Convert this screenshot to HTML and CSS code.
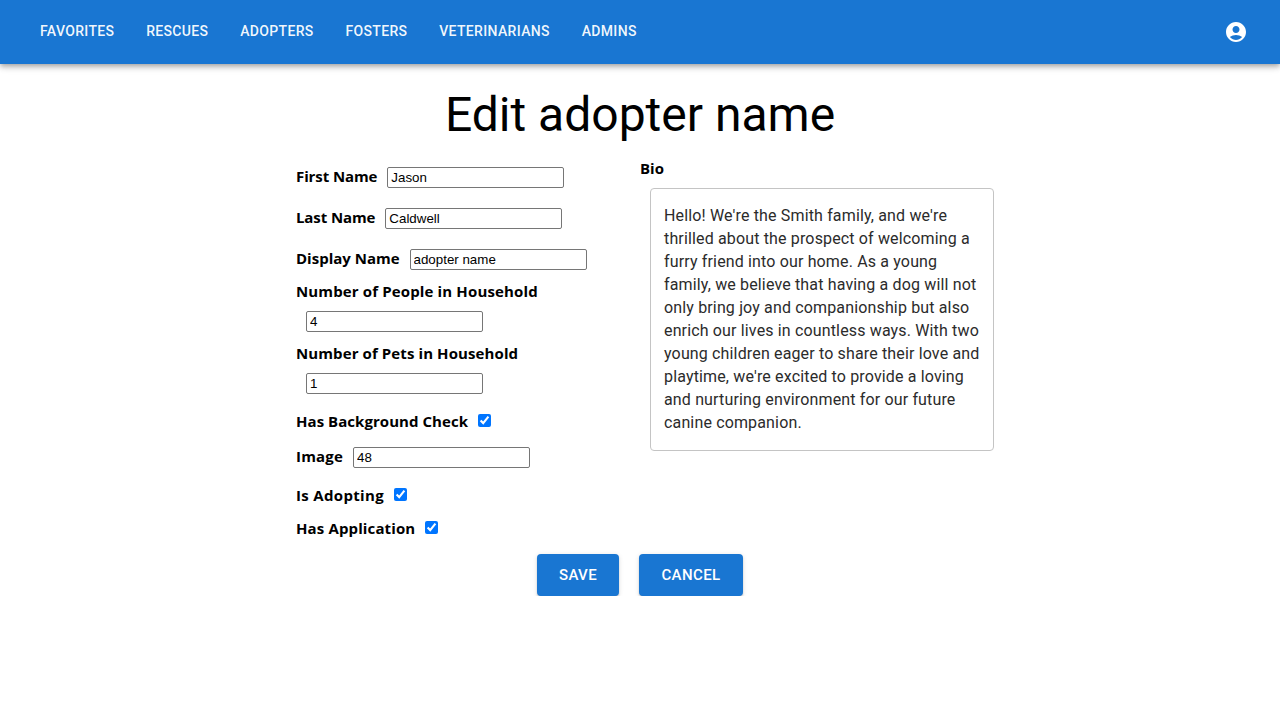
FILE: index.html
```html
<!DOCTYPE html>
<html lang="en">
<head>
<meta charset="utf-8">
<title>Edit adopter</title>
<link rel="stylesheet" href="styles.css">
</head>
<body>
<header class="appbar">
  <nav class="nav">
    <a>Favorites</a><a>Rescues</a><a>Adopters</a><a>Fosters</a><a>Veterinarians</a><a>Admins</a>
  </nav>
  <svg class="account" viewBox="0 0 24 24"><path d="M12 2C6.48 2 2 6.48 2 12s4.480 10 10 10 10-4.480 10-10S17.520 2 12 2zm0 4c1.930 0 3.500 1.570 3.500 3.500S13.930 13 12 13s-3.500-1.570-3.500-3.500S10.070 6 12 6zm0 14c-2.030 0-4.430-.82-6.140-2.880C7.550 15.800 9.680 15 12 15s4.450.8 6.140 2.120C16.430 19.180 14.030 20 12 20z"/></svg>
</header>
<main>
  <h1 class="title">Edit adopter name</h1>
  <form class="form">
    <div class="fields">
      <div class="row first"><label>First Name</label><input class="text" value="Jason"></div>
      <div class="row last"><label>Last Name</label><input class="text" value="Caldwell"></div>
      <div class="row"><label>Display Name</label><input class="text" value="adopter name"></div>
      <div class="stack people"><label>Number of People in Household</label><input class="text" value="4"></div>
      <div class="stack pets"><label>Number of Pets in Household</label><input class="text" value="1"></div>
      <div class="row check background"><label>Has Background Check</label><input type="checkbox" checked></div>
      <div class="row image"><label>Image</label><input class="text" value="48"></div>
      <div class="row check adopting"><label>Is Adopting</label><input type="checkbox" checked></div>
      <div class="row check application"><label>Has Application</label><input type="checkbox" checked></div>
    </div>
    <div class="bio">
      <label>Bio</label>
      <div class="bio-box">Hello! We're the Smith family, and we're<br>thrilled about the prospect of welcoming a<br>furry friend into our home. As a young<br>family, we believe that having a dog will not<br>only bring joy and companionship but also<br>enrich our lives in countless ways. With two<br>young children eager to share their love and<br>playtime, we're excited to provide a loving<br>and nurturing environment for our future<br>canine companion.</div>
    </div>
  </form>
  <div class="actions"><button class="button save">Save</button><button class="button cancel">Cancel</button></div>
</main>
</body>
</html>
```
FILE: styles.css
```css
* { box-sizing: border-box; }
body { margin: 0; background: #fff; font-family: "Open Sans", "Noto Sans", sans-serif; }
.appbar { display: flex; align-items: center; justify-content: space-between; height: 64px; padding: 0 32px 0 40px; background: #1976d2; color: #fff; box-shadow: 0 2px 4px -1px rgba(0,0,0,.2), 0 4px 5px rgba(0,0,0,.14), 0 1px 10px rgba(0,0,0,.12); }
.nav { display: flex; gap: 31.8px; font: 500 14px/24px Roboto, sans-serif; letter-spacing: .34px; text-transform: uppercase; padding-bottom: 2px; }
.nav a { color: rgba(255,255,255,.95); }
.account { width: 24px; height: 24px; fill: #fff; }
.title { margin: 23px 0 0; text-align: center; font: 400 48px/56px Roboto, sans-serif; }
.form { display: flex; width: 698px; margin: 14px 0 0 296px; height: 391px; }
.fields { width: 344px; }
label { font-size: 15px; line-height: 21px; font-weight: 700; white-space: nowrap; }
.row { display: flex; align-items: center; height: 41px; }
.row label { padding-bottom: 2px; }
.text { width: 177px; height: 21px; margin: 0 0 0 10px; padding: 1px 2px 1px 3px; border: 1px solid #767676; border-radius: 2px; font: 13.333px "Liberation Sans", sans-serif; }
.stack { display: flex; flex-direction: column; align-items: flex-start; height: 62px; gap: 9px; }
.first label, .last label { letter-spacing: -.1px; }
.people { margin-top: 1px; }
.people label { letter-spacing: .14px; }
.pets label { letter-spacing: .1px; }
.check input { width: 13px; height: 13px; margin: 0 0 4px 10px; }
.background { height: 35px; }
.background label { letter-spacing: .05px; }
.image { height: 34px; }
.image label { letter-spacing: .2px; }
.adopting { height: 44px; }
.adopting label { letter-spacing: .33px; }
.application { height: 23px; }
.application label { letter-spacing: .13px; }
.bio { flex: 1; padding-top: 1px; }
.bio label { display: block; }
.bio-box { width: 344px; height: 263px; margin: 9px 0 0 10px; padding: 14.5px 13px; border: 1px solid #c4c4c4; border-radius: 4px; font: 400 16px/23px Roboto, sans-serif; letter-spacing: .15px; color: #2b2b2b; white-space: nowrap; }
.actions { display: flex; justify-content: center; gap: 20px; margin-top: 6px; }
.button { height: 42px; padding: 0; border: 0; border-radius: 4px; background: #1976d2; color: #fff; font: 500 15px/26px Roboto, sans-serif; letter-spacing: .4px; text-transform: uppercase; box-shadow: 0 3px 1px -2px rgba(0,0,0,.2), 0 2px 2px rgba(0,0,0,.14), 0 1px 5px rgba(0,0,0,.12); }
.save { width: 82px; }
.cancel { width: 104px; }
```
